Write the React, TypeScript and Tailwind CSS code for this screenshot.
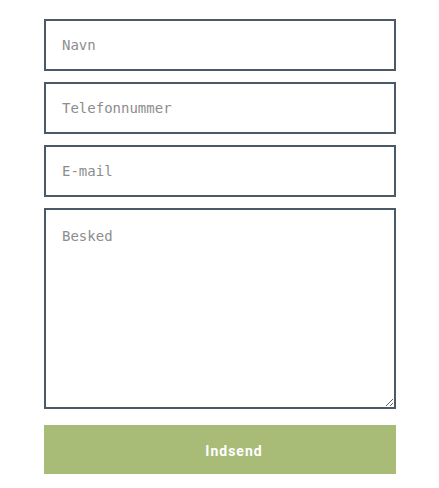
import { useState } from "react";

const fieldClass =
  "block w-full h-[52px] border-2 border-[#4c5966] bg-white px-[16px] text-[14px] text-[#333] placeholder:text-[#8d8d8d] outline-none";

export default function App() {
  const [form, setForm] = useState({ name: "", phone: "", email: "", message: "" });

  const update = (key: keyof typeof form) => (e: { target: { value: string } }) =>
    setForm({ ...form, [key]: e.target.value });

  return (
    <div className="min-h-[488px] w-full bg-white pt-[19px]">
      <form
        className="ml-[44px] flex w-[352px] flex-col gap-[11px]"
        style={{ fontFamily: '"DejaVu Sans Mono", "Liberation Mono", monospace' }}
        onSubmit={(e) => e.preventDefault()}
      >
        <input className={fieldClass} placeholder="Navn" value={form.name} onChange={update("name")} />
        <input className={fieldClass} placeholder="Telefonnummer" value={form.phone} onChange={update("phone")} />
        <input className={fieldClass} placeholder="E-mail" value={form.email} onChange={update("email")} />
        <textarea
          className="block h-[201px] w-full resize-y border-2 border-[#4c5966] bg-white px-[16px] pt-[16px] text-[14px] text-[#333] placeholder:text-[#8d8d8d] outline-none"
          placeholder="Besked"
          value={form.message}
          onChange={update("message")}
        />
        <button
          type="submit"
          className="mt-[5px] h-[49px] w-full bg-[#a8bc78] pl-[28px] pt-[3px] text-[14px] font-bold tracking-[1px] text-white"
          style={{ fontFamily: "Roboto, sans-serif" }}
        >
          Indsend
        </button>
      </form>
    </div>
  );
}
